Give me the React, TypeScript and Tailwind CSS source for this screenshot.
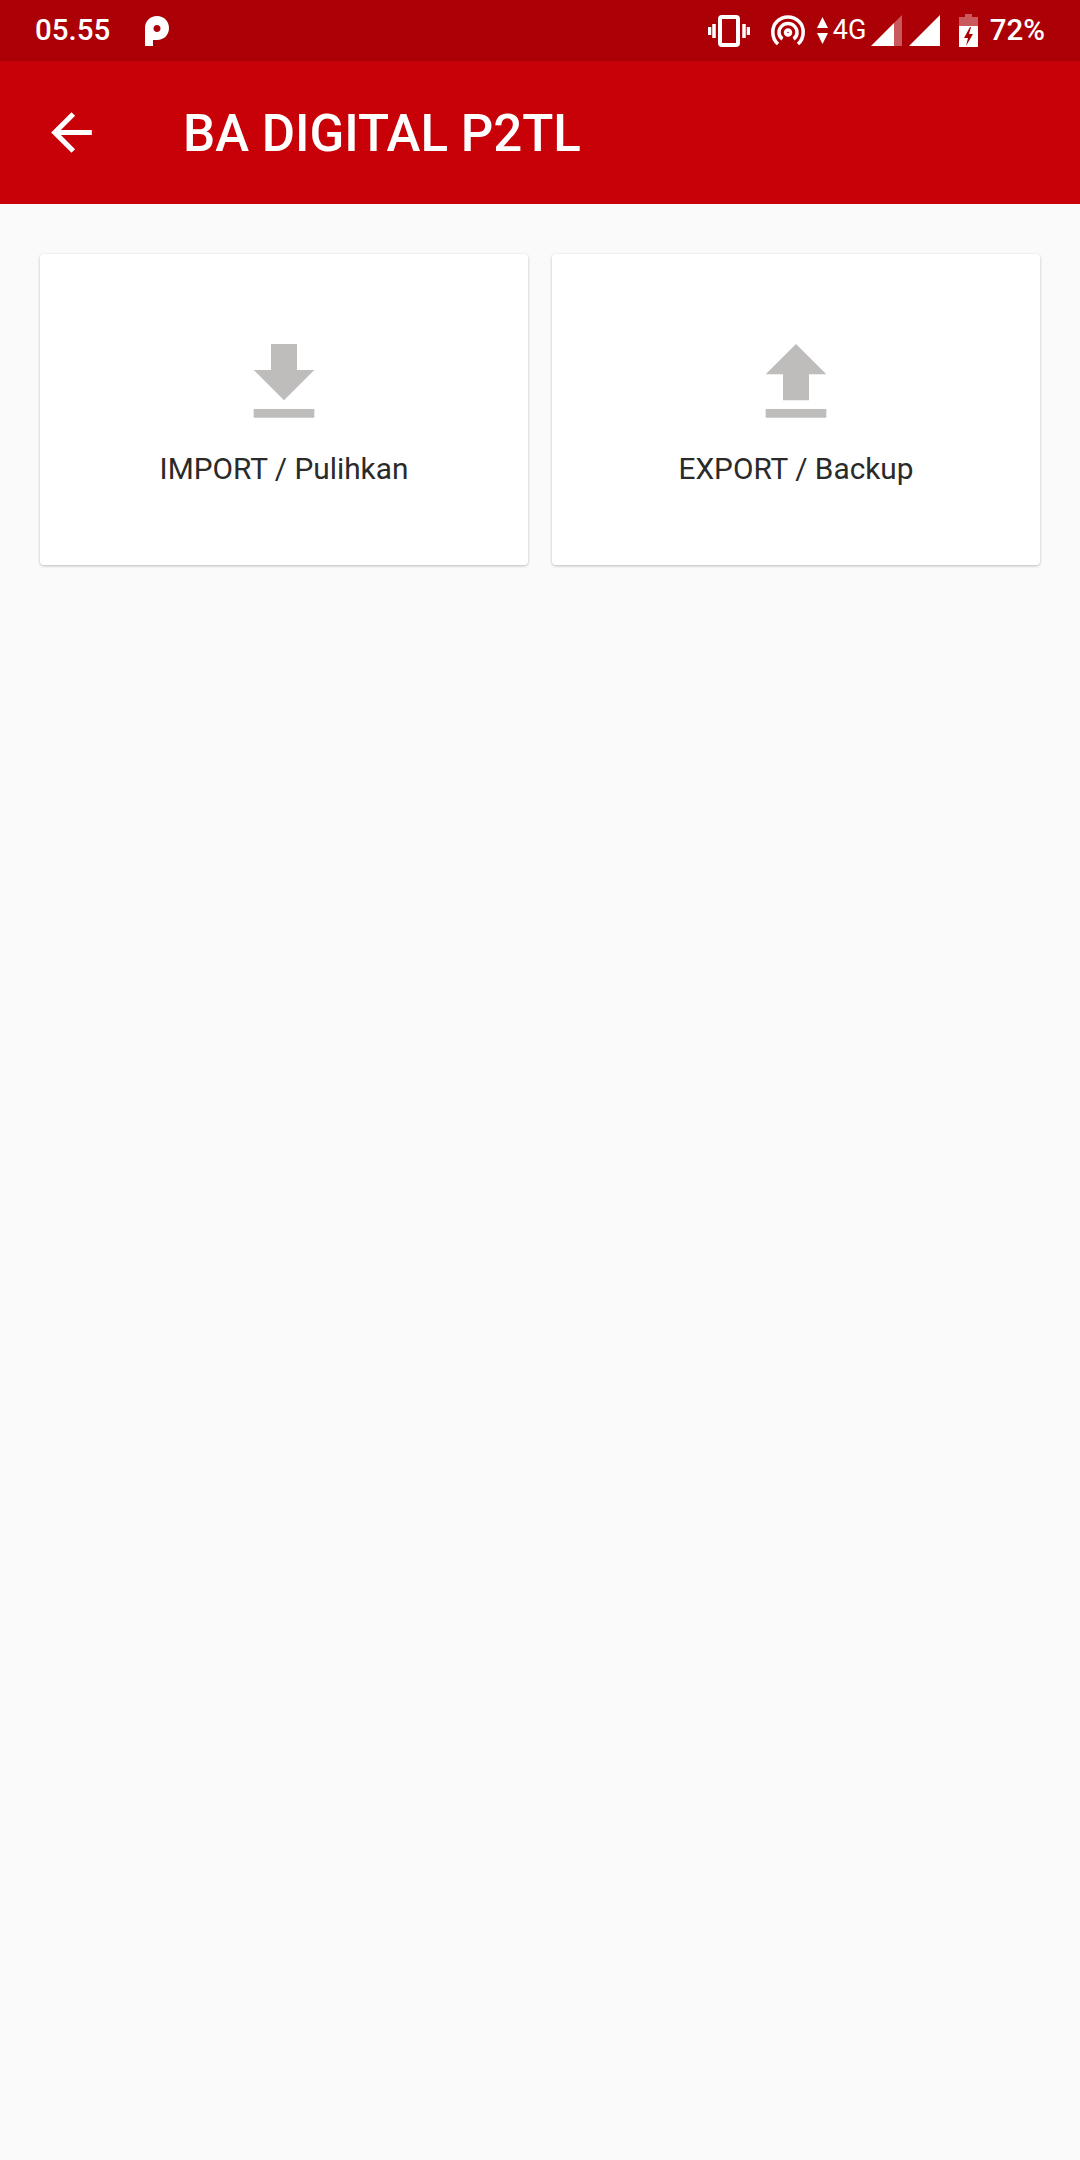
export default function App() {
  return (
    <div className="flex flex-col w-[1080px] h-[2160px] bg-[#fafafa] font-['Roboto',sans-serif]">
      <div className="flex items-center h-[61px] bg-[#ac0007] text-white">
        <span className="ml-[35px] w-[76px] text-[29.500px] font-medium leading-none">05.55</span>
        <svg className="ml-[33px]" width="26" height="32" viewBox="0 0 26 32">
          <path fillRule="evenodd" fill="#fff" d="M1 31V13C1 6 6 1 13 1s12 5 12 12-5 12-12 12H9v6H1zM13 10c-2 0-3.500 1.500-3.500 3.500S11 17 13 17s3.500-1.500 3.500-3.500S15 10 13 10z" />
        </svg>
        <div className="flex-1" />
        <svg width="42" height="32" viewBox="0 0 42 32" fill="none" stroke="#fff">
          <rect x="12" y="2" width="18" height="28" rx="2" strokeWidth="4" />
          <path d="M6 9v14M1.500 12v8M36 9v14M40.500 12v8" strokeWidth="3.500" />
        </svg>
        <svg className="ml-[21px]" width="34" height="32" viewBox="0 0 34 32" fill="none" stroke="#fff" strokeWidth="3.500">
          <path d="M7 29C3.500 26 1.800 22 1.800 17 1.800 8.500 8.500 2 17 2s15.200 6.500 15.200 15c0 5-1.700 9-5.200 12" />
          <path d="M11.500 24C9 22.500 8 20 8 17.500 8 12.500 12 8.500 17 8.500s9 4 9 9c0 2.500-1 5-3.500 6.500" />
          <circle cx="17" cy="17.500" r="2.500" />
        </svg>
        <svg className="ml-[12px]" width="11" height="27" viewBox="0 0 11 27" fill="#fff">
          <path d="M5.500 0L11 11H0zM5.500 27L0 16h11z" />
        </svg>
        <span className="ml-[5px] w-[33px] text-[27px] leading-none">4G</span>
        <svg className="ml-[5px]" width="31" height="31" viewBox="0 0 31 31">
          <path fill="#fff" fillOpacity="0.35" d="M31 0v31H23V8z" />
          <path fill="#fff" d="M23 8v23H0z" />
        </svg>
        <svg className="ml-[7px]" width="31" height="31" viewBox="0 0 31 31">
          <path fill="#fff" d="M31 0v31H0z" />
        </svg>
        <svg className="ml-[19px]" width="19" height="33" viewBox="0 0 19 33">
          <path fill="#fff" fillOpacity="0.35" d="M6 0h7v3h6v9H0V3h6z" />
          <path fill="#fff" fillRule="evenodd" d="M0 12h19v21H0zM11 13l-6 11h4l-2 8 7-12h-4l2-7z" />
        </svg>
        <span className="ml-[12px] mr-[35px] text-[29.500px] font-medium leading-none">72%</span>
      </div>
      <div className="flex items-center h-[143px] bg-[#c80008] text-white">
        <svg className="ml-[41px]" width="61" height="61" viewBox="0 0 24 24" fill="#fff">
          <path d="M20 11H7.830l5.590-5.590L12 4l-8 8 8 8 1.410-1.410L7.830 13H20v-2z" />
        </svg>
        <span className="ml-[81px] mt-[2px] text-[51px] font-medium leading-none">BA DIGITAL P2TL</span>
      </div>
      <div className="grid grid-cols-2 gap-[24px] px-[40px] pt-[50px]">
        <Card label="IMPORT / Pulihkan" d="M19 9h-4V3H9v6H5l7 7 7-7zM5 18v2h14v-2H5z" />
        <Card label="EXPORT / Backup" d="M9 16h6v-6h4l-7-7-7 7h4zm-4 2h14v2H5z" />
      </div>
    </div>
  );
}

function Card({ label, d }: { label: string; d: string }) {
  return (
    <div className="flex flex-col items-center h-[311px] pt-[77px] bg-white rounded-[4px] shadow-[0_1px_3px_rgba(0,0,0,0.25)]">
      <svg width="104" height="104" viewBox="0 0 24 24" fill="#bfbcbc">
        <path d={d} />
      </svg>
      <span className="mt-[19px] text-[29.800px] text-[#2a2a2a] leading-none">{label}</span>
    </div>
  );
}
